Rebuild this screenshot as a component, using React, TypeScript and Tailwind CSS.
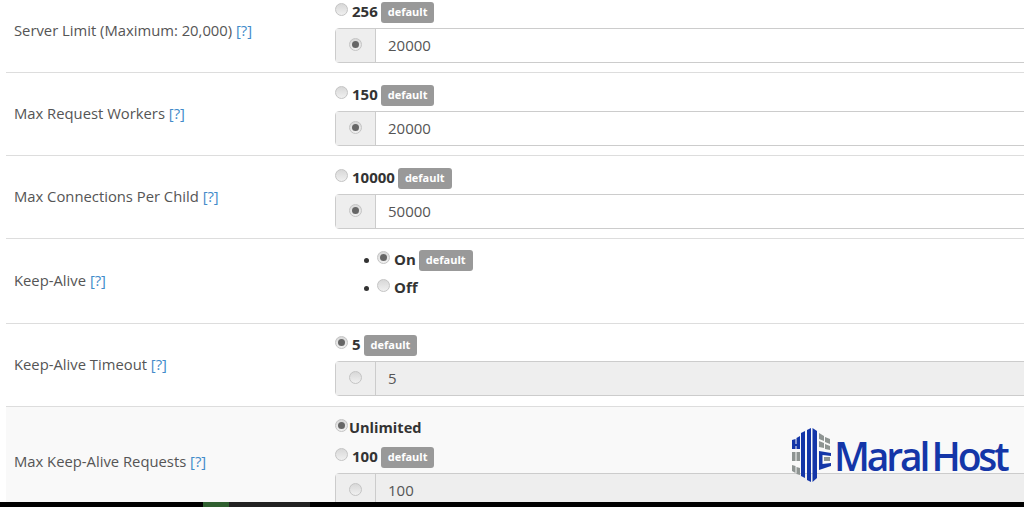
const Radio = ({ checked }: { checked?: boolean }) => (
  <span className="flex h-[13px] w-[13px] shrink-0 items-center justify-center rounded-full border border-[#c4c4c4] bg-linear-to-b from-[#d8d8d8] to-[#f0f0f0]">
    {checked && <span className="h-[7px] w-[7px] rounded-full bg-[#666]" />}
  </span>
);

const Badge = () => (
  <span className="flex h-[21px] items-center rounded-[3px] bg-[#999] px-[7px] text-[11px] font-bold text-white">
    default
  </span>
);

const Choice = ({ label, checked, isDefault = true, tight }: { label: string; checked?: boolean; isDefault?: boolean; tight?: boolean }) => (
  <div className="flex h-[21px] items-center">
    <span className="-mt-[6px]">
      <Radio checked={checked} />
    </span>
    <span className={`-mt-[2px] font-bold text-[#333] ${tight ? "ml-[1px] text-[14.6px]" : "mr-[3px] ml-[4px] text-[15px]"}`}>{label}</span>
    {isDefault && <Badge />}
  </div>
);

const ValueInput = ({ value, disabled }: { value: string; disabled?: boolean }) => (
  <div className="mt-[5px] flex h-[35px] w-[720px] rounded-[4px] border border-[#ccc]">
    <div className="flex w-[40px] shrink-0 items-center justify-center border-r border-[#ccc] bg-[#eee]">
      <span className="-mt-[3px]">
        <Radio checked={!disabled} />
      </span>
    </div>
    <div className={`flex flex-1 items-center px-[12px] text-[15px] text-[#555] ${disabled ? "bg-[#eee]" : "bg-white"}`}>
      {value}
    </div>
  </div>
);

const Row = ({
  label,
  children,
  className = "",
}: {
  label: string;
  children: React.ReactNode;
  className?: string;
}) => (
  <div className={`flex border-t border-[#ddd] ${className}`}>
    <div className="flex w-[329px] shrink-0 items-center px-[8px] pb-[2px] text-[14.8px] text-[#555]">
      <span>
        {label} <span className="text-[#428bca]">[?]</span>
      </span>
    </div>
    <div className="flex-1 pt-[12px] pb-[9px]">{children}</div>
  </div>
);

const Bullet = ({ children, className = "" }: { children: React.ReactNode; className?: string }) => (
  <li className={`flex items-center gap-[8px] ${className}`}>
    <span className="h-[5px] w-[5px] rounded-full bg-[#333]" />
    {children}
  </li>
);

const Logo = () => (
  <div className="absolute top-[428px] left-[792px] flex items-center">
    <svg width="41" height="55" viewBox="0 0 41 55">
      <g fill="#1436a8">
        <polygon points="9,5 13,3 13,50 9,48" />
        <polygon points="15,2 19,0 19,54 15,52" />
        <polygon points="20.5,0 25,3 25,50 20.5,54" />
        <polygon points="0,12 3.5,11 3.5,21 0,21" />
        <polygon points="4.5,10 8,8 8,21 4.5,21" />
        <polygon points="0,16 8,16 8,18 0,18" />
        <polygon points="27,23 39,25 39,28 30.5,27 30.5,36 39,35 39,38 27,42" />
      </g>
      <g fill="#8e9492">
        <polygon points="27,5 32,8 32,13 27,11" />
        <polygon points="33,9 38,11 38,16 33,14" />
        <polygon points="27,13 32,15 32,20 27,19" />
        <polygon points="33,16 38,18 38,22 33,21" />
        <polygon points="32,29 38,29 38,33 32,33" />
        <polygon points="0,24 3.5,24 3.5,33 0,33" />
        <polygon points="4.5,24 8,24 8,33 4.5,33" />
        <polygon points="0,37 3.5,38 3.5,45 0,43" />
        <polygon points="4.5,39 8,40 8,47 4.5,46" />
      </g>
    </svg>
    <span className="ml-[1px] font-['Open_Sans',sans-serif] text-[39px] leading-none font-semibold tracking-[-3.1px] [word-spacing:-3px] text-[#1436a8]">
      Maral Host
    </span>
  </div>
);

export default function App() {
  return (
    <div className="relative h-[507px] w-[1024px] overflow-hidden bg-white font-['Open_Sans',sans-serif]">
      <div className="-mt-[10px] ml-[6px]">
        <Row label="Server Limit (Maximum: 20,000)" className="border-t-0">
          <Choice label="256" />
          <ValueInput value="20000" />
        </Row>
        <Row label="Max Request Workers">
          <Choice label="150" />
          <ValueInput value="20000" />
        </Row>
        <Row label="Max Connections Per Child">
          <Choice label="10000" />
          <ValueInput value="50000" />
        </Row>
        <Row label="Keep-Alive">
          <ul className="-mt-[1px] h-[64px] pl-[29px]">
            <Bullet className="mb-[7px]">
              <Choice label="On" checked />
            </Bullet>
            <Bullet>
              <Choice label="Off" isDefault={false} />
            </Bullet>
          </ul>
        </Row>
        <Row label="Keep-Alive Timeout">
          <div className="-mt-[1px] pb-[1px]">
            <Choice label="5" checked />
            <ValueInput value="5" disabled />
          </div>
        </Row>
        <Row label="Max Keep-Alive Requests" className="bg-[#f9f9f9]">
          <div className="-mt-[1px] mb-[8px]">
            <Choice label="Unlimited" checked isDefault={false} tight />
          </div>
          <Choice label="100" />
          <ValueInput value="100" disabled />
        </Row>
      </div>
      <Logo />
      <div className="absolute right-0 bottom-0 left-0 flex h-[5px] bg-black">
        <div className="ml-[203px] w-[26px] bg-[#2f5f2f]" />
        <div className="w-[81px] bg-[#222]" />
      </div>
    </div>
  );
}
